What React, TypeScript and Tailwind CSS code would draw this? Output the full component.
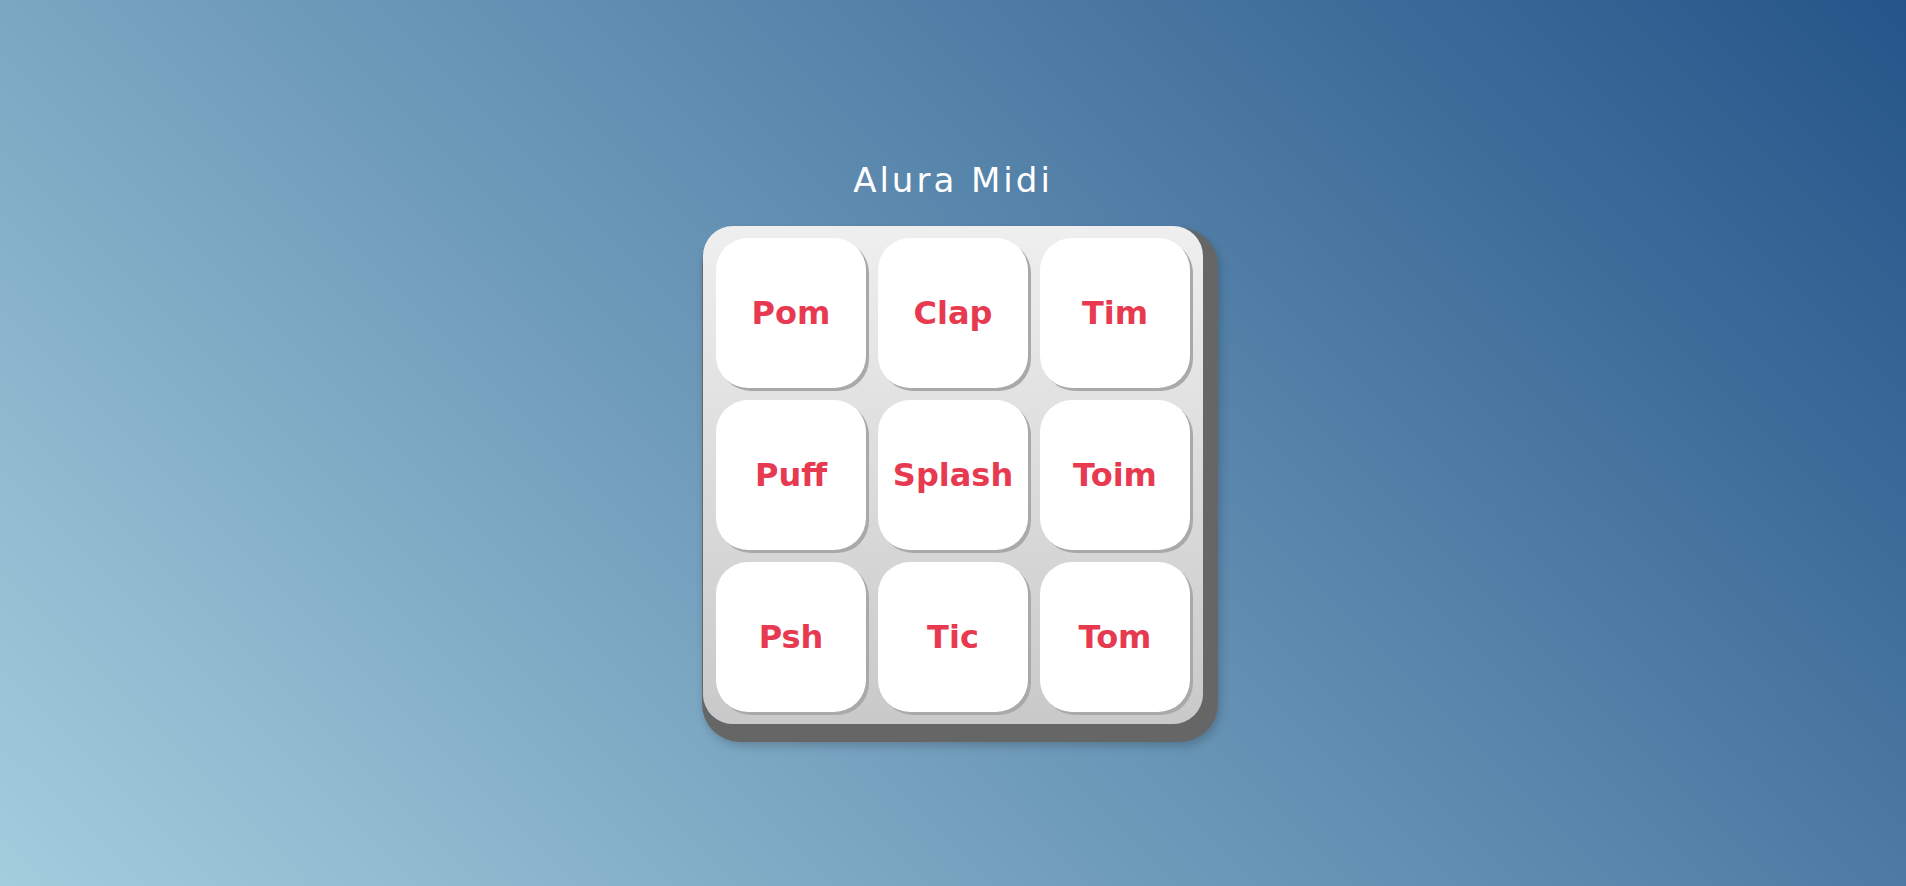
import React from "react";

const keys = ["Pom", "Clap", "Tim", "Puff", "Splash", "Toim", "Psh", "Tic", "Tom"];

export default function App() {
  return (
    <div
      className="w-full h-[886px] pt-[2px] flex flex-col items-center justify-center bg-[linear-gradient(45deg,#A3CDDD,#255489)]"
      style={{ fontFamily: '"DejaVu Sans", sans-serif' }}
    >
      <h1 className="text-white text-[34px] leading-[30px] mb-[31px] tracking-[3px] font-normal">
        Alura Midi
      </h1>
      <section className="w-[500px] h-[498px] py-[12px] pl-[13px] pr-[13px] rounded-[30px] bg-[linear-gradient(180deg,#efefef,#c9c9c9)] shadow-[7px_10px_0_8px_#666666,9px_14px_10px_8px_rgba(0,0,0,0.2)] grid grid-cols-[repeat(3,150px)] grid-rows-[repeat(3,150px)] gap-[12px]">
        {keys.map((k) => (
          <button
            key={k}
            className="w-[150px] h-[150px] rounded-[32px] bg-white shadow-[3px_3px_0_#a9a9a9] flex items-center justify-center text-[#e73a50] text-[32px] font-bold"
          >
            {k}
          </button>
        ))}
      </section>
    </div>
  );
}
